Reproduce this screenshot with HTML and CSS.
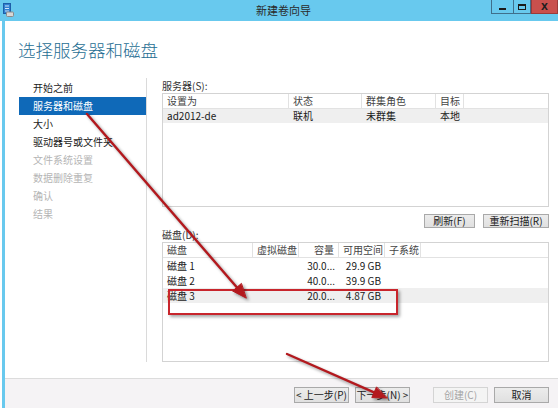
FILE: index.html
```html
<!DOCTYPE html>
<html lang="zh-CN">
<head>
<meta charset="utf-8">
<title>新建卷向导</title>
<link rel="stylesheet" href="styles.css">
</head>
<body>
<div class="titlebar">
  <svg class="appicon" width="11" height="14" viewBox="0 0 11 14">
    <rect x="0.5" y="0.5" width="7" height="10" fill="#2f7fd0" stroke="#1d5ea8"/>
    <rect x="2" y="2.5" width="4" height="1" fill="#cfe6fb"/>
    <rect x="2" y="5" width="4" height="1" fill="#cfe6fb"/>
    <rect x="2" y="7.5" width="4" height="1" fill="#cfe6fb"/>
    <rect x="3.5" y="9" width="7" height="4.5" rx="1" fill="#d7d7d7" stroke="#8a8a8a"/>
  </svg>
  <div class="title">新建卷向导</div>
  <div class="controls">
    <div class="ctl ctl-min"><span class="min-glyph"></span></div>
    <div class="ctl ctl-max"><span class="max-glyph"></span></div>
    <div class="ctl ctl-close">X</div>
  </div>
</div>
<div class="window">
  <div class="main">
    <h1 class="heading">选择服务器和磁盘</h1>
    <div class="content">
      <ul class="nav">
        <li class="nav-item">开始之前</li>
        <li class="nav-item selected">服务器和磁盘</li>
        <li class="nav-item">大小</li>
        <li class="nav-item">驱动器号或文件夹</li>
        <li class="nav-item disabled">文件系统设置</li>
        <li class="nav-item disabled">数据删除重复</li>
        <li class="nav-item disabled">确认</li>
        <li class="nav-item disabled">结果</li>
      </ul>
      <div class="panel">
        <div class="label">服务器(S):</div>
        <div class="table server-table">
          <div class="row head srv-cols">
            <div class="cell">设置为</div>
            <div class="cell">状态</div>
            <div class="cell">群集角色</div>
            <div class="cell">目标</div>
            <div class="cell last"></div>
          </div>
          <div class="row body srv-cols shaded">
            <div class="cell">ad2012-de</div>
            <div class="cell">联机</div>
            <div class="cell">未群集</div>
            <div class="cell">本地</div>
            <div class="cell"></div>
          </div>
        </div>
        <div class="btn-row">
          <button class="btn small btn-refresh">刷新(F)</button>
          <button class="btn small btn-rescan">重新扫描(R)</button>
        </div>
        <div class="label label-disk">磁盘(D):</div>
        <div class="table disk-table">
          <div class="row head disk-cols">
            <div class="cell">磁盘</div>
            <div class="cell">虚拟磁盘</div>
            <div class="cell right">容量</div>
            <div class="cell right">可用空间</div>
            <div class="cell">子系统</div>
            <div class="cell last"></div>
          </div>
          <div class="row body disk-cols">
            <div class="cell">磁盘 1</div>
            <div class="cell"></div>
            <div class="cell right">30.0...</div>
            <div class="cell right">29.9 GB</div>
            <div class="cell"></div>
            <div class="cell"></div>
          </div>
          <div class="row body disk-cols">
            <div class="cell">磁盘 2</div>
            <div class="cell"></div>
            <div class="cell right">40.0...</div>
            <div class="cell right">39.9 GB</div>
            <div class="cell"></div>
            <div class="cell"></div>
          </div>
          <div class="row body disk-cols shaded">
            <div class="cell">磁盘 3</div>
            <div class="cell"></div>
            <div class="cell right">20.0...</div>
            <div class="cell right">4.87 GB</div>
            <div class="cell"></div>
            <div class="cell"></div>
          </div>
        </div>
      </div>
    </div>
  </div>
  <div class="footer">
    <button class="btn wide">&lt; 上一步(P)</button>
    <button class="btn wide">下一步(N) &gt;</button>
    <button class="btn wide disabled gap-left">创建(C)</button>
    <button class="btn wide">取消</button>
  </div>
</div>

<div class="mark-box"></div>
<svg class="annot" width="558" height="408" viewBox="0 0 558 408">
  <g fill="#b3191e" stroke="#b3191e" stroke-width="2.4" stroke-linecap="round">
    <line x1="87" y1="114" x2="237" y2="287.5"/>
    <polygon stroke-width="1" points="246,298 232.6,291 241.2,283.6"/>
    <line x1="287" y1="354" x2="374" y2="392.3"/>
    <polygon stroke-width="1" points="387,398 371.8,397.6 376.4,387.2"/>
  </g>
</svg>
</body>
</html>
```

FILE: styles.css
```css
* { box-sizing: border-box; }

html, body {
  margin: 0;
  padding: 0;
  width: 558px;
  height: 408px;
  overflow: hidden;
  background: #ffffff;
  font-family: "Noto Sans CJK SC", "Noto Sans", sans-serif;
  font-size: 10px;
  color: #1a1a1a;
}

.titlebar {
  height: 21px;
  background: #68c9ee;
  display: flex;
  align-items: flex-start;
}

.appicon {
  margin: 3px 0 0 3px;
  flex: none;
}

.title {
  flex: 1;
  text-align: center;
  padding-left: 62px;
  line-height: 21px;
  font-size: 11px;
  color: #2a2a2a;
}

.controls {
  display: flex;
  flex: none;
  height: 14px;
}

.ctl {
  height: 14px;
  border: 1px solid #3f6f8c;
  border-top: none;
  display: flex;
  align-items: center;
  justify-content: center;
}

.ctl-min { width: 22px; border-right: none; align-items: flex-end; padding-bottom: 3px; }
.ctl-max { width: 18px; }
.ctl-close {
  width: 27px;
  background: #c9504d;
  border-color: #9b3b3a;
  font-family: "DejaVu Sans", sans-serif;
  font-weight: bold;
  font-size: 9px;
  color: #1e1e1e;
}

.min-glyph {
  width: 7px;
  height: 2px;
  background: #1b1b1b;
}

.max-glyph {
  width: 8px;
  height: 6px;
  border: 1px solid #1b1b1b;
  border-top-width: 2px;
}

.window {
  margin-left: 2px;
  border-left: 3px solid #68c9ee;
  height: 387px;
  display: flex;
  flex-direction: column;
}

.main {
  height: 357px;
}

.heading {
  margin: 0;
  padding: 18px 0 0 13px;
  height: 40px;
  font-size: 17.5px;
  line-height: 22px;
  font-weight: 300;
  color: #1f6e93;
}

.content {
  margin-top: 17px;
  height: 284px;
  display: flex;
}

.nav {
  list-style: none;
  margin: 0;
  padding: 1px 0 0 0;
  width: 142px;
  flex: none;
  border-right: 1px solid #dadada;
}

.nav-item {
  margin-left: 14px;
  padding-left: 14px;
  height: 18px;
  line-height: 18px;
  color: #1a1a1a;
}

.nav-item.selected {
  background: #0f69b8;
  color: #ffffff;
}

.nav-item.disabled { color: #b5b5b5; }

.panel {
  flex: 1;
  padding: 0 9px 0 15px;
  display: flex;
  flex-direction: column;
}

.label {
  height: 15px;
  line-height: 15px;
  color: #333;
}

.label-disk { height: 14px; line-height: 13px; }

.table {
  border: 1px solid #d3d3d3;
  background: #fff;
}

.server-table { height: 114px; }
.disk-table { height: 120px; }

.row {
  display: grid;
  align-items: stretch;
}

.srv-cols { grid-template-columns: 126px 73px 74px 28px 1fr; }
.disk-cols { grid-template-columns: 90px 46px 40px 46px 36px 1fr; }

.row.head {
  height: 15px;
  border-bottom: 1px solid #e2e2e2;
  color: #444;
}

.row.head .cell {
  border-right: 1px solid #e2e2e2;
  line-height: 14px;
}

.row.head .cell.last { border-right: none; }

.server-table .row.body { height: 14px; }
.disk-table .row.body { height: 15px; }

.row.body .cell { line-height: 15px; }
.server-table .row.body .cell { line-height: 14px; }

.row.shaded { background: #efefef; }

.cell {
  padding: 0 4px;
  white-space: nowrap;
  overflow: hidden;
}

.cell.right { text-align: right; padding-right: 4px; }

.btn-row {
  margin-top: 7px;
  height: 14px;
  display: flex;
  justify-content: flex-end;
  gap: 8px;
}

.btn {
  font-family: inherit;
  font-size: 10px;
  color: #222;
  background: linear-gradient(#ececec, #e0e0e0);
  border: 1px solid #a9a9a9;
  border-radius: 0;
  padding: 0;
  margin: 0;
}

.btn.small { height: 14px; line-height: 12px; }
.btn-refresh { width: 51px; }
.btn-rescan { width: 66px; }

.footer {
  height: 30px;
  border-top: 1px solid #dcdcdc;
  background: #f5f3f5;
  display: flex;
  justify-content: flex-end;
  align-items: flex-start;
  padding: 8px 9px 0 0;
  gap: 6px;
}

.btn.wide {
  width: 55px;
  height: 16px;
  line-height: 14px;
}

.btn.disabled {
  background: #f4f4f4;
  border-color: #d4d4d4;
  color: #a4a4a4;
}

.gap-left { margin-left: 17px; }

.mark-box {
  position: absolute;
  left: 168px;
  top: 289px;
  width: 230px;
  height: 26px;
  border: 2px solid #c8252c;
  box-shadow: 2px 2px 3px rgba(0, 0, 0, 0.35);
}

.annot {
  position: absolute;
  left: 0;
  top: 0;
  filter: drop-shadow(2px 2px 1.5px rgba(0, 0, 0, 0.4));
}
```
